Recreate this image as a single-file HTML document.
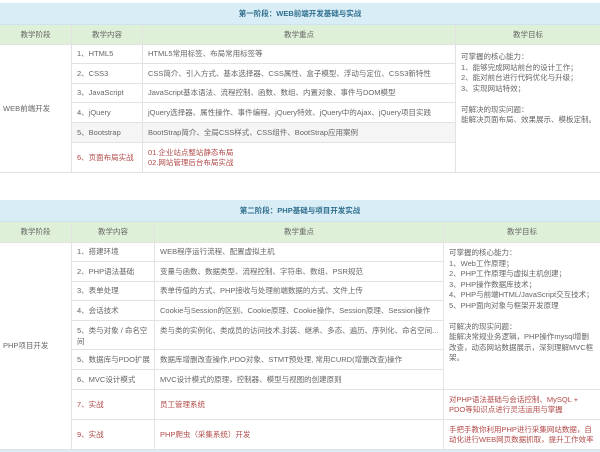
<!DOCTYPE html>
<html><head><meta charset="utf-8">
<style>
*{margin:0;padding:0;box-sizing:border-box}
body{width:600px;height:452px;background:#fff;position:relative;overflow:hidden;font-family:"Liberation Sans","Noto Sans CJK SC",sans-serif;font-size:7.5px;color:#666}
.c{position:absolute;border-right:1px solid #e3e3e3;border-bottom:1px solid #e3e3e3;padding:0 5px;display:flex;align-items:center;line-height:10px;white-space:nowrap;overflow:hidden}
.t{position:absolute;left:0;width:600px;background:#d9edf7;color:#31708f;font-weight:bold;display:flex;align-items:center;justify-content:center;border-bottom:1px solid #cfe3ee}
.h{background:#dff0d8;justify-content:center;color:#666}
.r{color:#b04a48}
.g{background:#f5f5f5}
.top{align-items:flex-start;padding-top:5px;white-space:normal;line-height:10.5px}
</style></head><body>
<div class="t" style="top:3px;height:22px">第一阶段：WEB前端开发基础与实战</div>
<div class="c h" style="left:0;top:25px;width:72px;height:20px">教学阶段</div>
<div class="c h" style="left:72px;top:25px;width:71px;height:20px">教学内容</div>
<div class="c h" style="left:143px;top:25px;width:313px;height:20px">教学重点</div>
<div class="c h" style="left:456px;top:25px;width:144px;height:20px;border-right:none">教学目标</div>
<div class="c" style="left:0;top:45px;width:72px;height:128px;padding-left:3px">WEB前端开发</div>
<div class="c" style="left:72px;top:45px;width:71px;height:19px">1、HTML5</div>
<div class="c" style="left:143px;top:45px;width:313px;height:19px">HTML5常用标签、布局常用标签等</div>
<div class="c" style="left:72px;top:64px;width:71px;height:20px">2、CSS3</div>
<div class="c" style="left:143px;top:64px;width:313px;height:20px">CSS简介、引入方式、基本选择器、CSS属性、盒子模型、浮动与定位、CSS3新特性</div>
<div class="c" style="left:72px;top:84px;width:71px;height:19px">3、JavaScript</div>
<div class="c" style="left:143px;top:84px;width:313px;height:19px">JavaScript基本语法、流程控制、函数、数组、内置对象、事件与DOM模型</div>
<div class="c" style="left:72px;top:103px;width:71px;height:20px">4、jQuery</div>
<div class="c" style="left:143px;top:103px;width:313px;height:20px">jQuery选择器、属性操作、事件编程、jQuery特效、jQuery中的Ajax、jQuery项目实践</div>
<div class="c g" style="left:72px;top:123px;width:71px;height:20px">5、Bootstrap</div>
<div class="c g" style="left:143px;top:123px;width:313px;height:20px">BootStrap简介、全局CSS样式、CSS组件、BootStrap应用案例</div>
<div class="c r" style="left:72px;top:143px;width:71px;height:30px">6、页面布局实战</div>
<div class="c r" style="left:143px;top:143px;width:313px;height:30px;display:block;padding-top:5px">01.企业站点整站静态布局<br>02.网站管理后台布局实战</div>
<div class="c top" style="left:456px;top:45px;width:144px;height:128px;border-right:none;padding-top:7px;padding-right:0;display:block">可掌握的核心能力：<br>1、能够完成网站前台的设计工作；<br>2、能对前台进行代码优化与升级；<br>3、实现网站特效；<br><br>可解决的现实问题：<br><span style="white-space:nowrap">能解决页面布局、效果展示、模板定制。</span></div>

<div class="t" style="top:200px;height:22px">第二阶段：PHP基础与项目开发实战</div>
<div class="c h" style="left:0;top:222px;width:72px;height:21px">教学阶段</div>
<div class="c h" style="left:72px;top:222px;width:83px;height:21px">教学内容</div>
<div class="c h" style="left:155px;top:222px;width:289px;height:21px">教学重点</div>
<div class="c h" style="left:444px;top:222px;width:156px;height:21px;border-right:none">教学目标</div>
<div class="c" style="left:0;top:243px;width:72px;height:207px;padding-left:3px">PHP项目开发</div>
<div class="c" style="left:72px;top:243px;width:83px;height:19px">1、搭建环境</div>
<div class="c" style="left:155px;top:243px;width:289px;height:19px">WEB程序运行流程、配置虚拟主机</div>
<div class="c" style="left:72px;top:262px;width:83px;height:20px">2、PHP语法基础</div>
<div class="c" style="left:155px;top:262px;width:289px;height:20px">变量与函数、数据类型、流程控制、字符串、数组、PSR规范</div>
<div class="c" style="left:72px;top:282px;width:83px;height:19px">3、表单处理</div>
<div class="c" style="left:155px;top:282px;width:289px;height:19px">表单传值的方式、PHP接收与处理前端数据的方式、文件上传</div>
<div class="c" style="left:72px;top:301px;width:83px;height:20px">4、会话技术</div>
<div class="c" style="left:155px;top:301px;width:289px;height:20px">Cookie与Session的区别、Cookie原理、Cookie操作、Session原理、Session操作</div>
<div class="c top" style="left:72px;top:321px;width:83px;height:29px">5、类与对象 / 命名空间</div>
<div class="c top" style="left:155px;top:321px;width:289px;height:29px;white-space:nowrap">类与类的实例化、类成员的访问技术,封装、继承、多态、遍历、序列化、命名空间...</div>
<div class="c" style="left:72px;top:350px;width:83px;height:20px">5、数据库与PDO扩展</div>
<div class="c" style="left:155px;top:350px;width:289px;height:20px">数据库增删改查操作,PDO对象、STMT预处理, 常用CURD(增删改查)操作</div>
<div class="c" style="left:72px;top:370px;width:83px;height:20px">6、MVC设计模式</div>
<div class="c" style="left:155px;top:370px;width:289px;height:20px">MVC设计模式的原理，控制器、模型与视图的创建原则</div>
<div class="c r" style="left:72px;top:390px;width:83px;height:30px">7、实战</div>
<div class="c r" style="left:155px;top:390px;width:289px;height:30px">员工管理系统</div>
<div class="c r" style="left:72px;top:420px;width:83px;height:30px">9、实战</div>
<div class="c r" style="left:155px;top:420px;width:289px;height:30px">PHP爬虫（采集系统）开发</div>
<div class="c top" style="left:444px;top:243px;width:156px;height:147px;border-right:none">可掌握的核心能力：<br>1、Web工作原理；<br>2、PHP工作原理与虚拟主机创建；<br>3、PHP操作数据库技术；<br>4、PHP与前端HTML/JavaScript交互技术；<br>5、PHP面向对象与框架开发原理<br><br>可解决的现实问题：<br>能解决常规业务逻辑，PHP操作mysql增删改查，动态网站数据展示，深刻理解MVC框架。</div>
<div class="c r" style="left:444px;top:390px;width:156px;height:30px;white-space:normal;border-right:none">对PHP语法基础与会话控制、MySQL + PDO等知识点进行灵活运用与掌握</div>
<div class="c r" style="left:444px;top:420px;width:156px;height:30px;white-space:normal;border-right:none">手把手教你利用PHP进行采集网站数据，自动化进行WEB网页数据抓取，提升工作效率</div>
<div style="position:absolute;left:0;top:450px;width:600px;height:2px;background:#d9edf7"></div>
</body></html>
